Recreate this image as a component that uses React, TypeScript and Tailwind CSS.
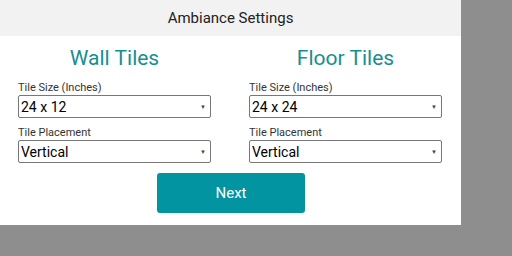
import React from 'react';

const TileSelect = ({ label, value }: { label: string; value: string }) => (
  <div className="flex flex-col">
    <span className="text-[11px] leading-[13px] text-[#333333]">{label}</span>
    <div className="mt-[1px] flex h-[23px] items-center justify-between rounded-[2px] border border-[#777777] bg-white pl-[2px] pr-[4px]">
      <span className="text-[14px] leading-none text-black">{value}</span>
      <span className="text-[6px] leading-none text-[#444444]">▼</span>
    </div>
  </div>
);

const TileColumn = ({ title, size }: { title: string; size: string }) => (
  <div className="flex w-[193px] flex-col">
    <h2 className="text-center text-[21px] leading-[26px] text-[#178f8f]">{title}</h2>
    <div className="mt-[10px]">
      <TileSelect label="Tile Size (Inches)" value={size} />
    </div>
    <div className="mt-[8px]">
      <TileSelect label="Tile Placement" value="Vertical" />
    </div>
  </div>
);

const App = () => {
  return (
    <div className="h-[256px] w-[512px] overflow-hidden bg-[#8e8e8e] font-['Roboto',sans-serif]">
      <div className="flex h-[225px] w-[461px] flex-col bg-white">
        <div className="flex h-[36px] items-center justify-center bg-[#f2f2f2]">
          <span className="text-[15px] text-[#222222]">Ambiance Settings</span>
        </div>
        <div className="flex gap-[38px] pl-[18px] pt-[9px]">
          <TileColumn title="Wall Tiles" size="24 x 12" />
          <TileColumn title="Floor Tiles" size="24 x 24" />
        </div>
        <div className="mt-[10px] pl-[157px]">
          <button className="flex h-[40px] w-[148px] items-center justify-center rounded-[3px] bg-[#0294a0] text-[15px] text-white">
            Next
          </button>
        </div>
      </div>
    </div>
  );
};

export default App;
